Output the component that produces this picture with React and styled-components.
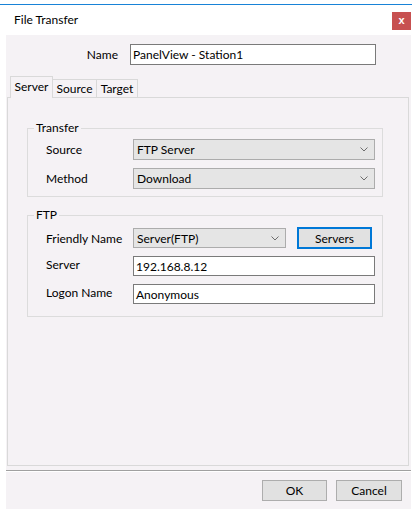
import React from "react";
import styled, { createGlobalStyle } from "styled-components";

const FONT = `"Segoe UI", Lato, "Liberation Sans", sans-serif`;

const GlobalStyle = createGlobalStyle`
  body {
    margin: 0;
    background: #ffffff;
    font-family: ${FONT};
    font-size: 12px;
    color: #000000;
  }
`;

const Window = styled.div`
  margin-top: 4px;
  width: 412px;
  border-top: 1px solid #1883d7;
  background: #ffffff;
`;

const TitleBar = styled.div`
  height: 30px;
  display: flex;
  align-items: center;
  justify-content: space-between;
  padding-left: 14px;
  padding-right: 1px;
`;

const Title = styled.span`
  font-size: 12px;
  margin-top: -1px;
`;

const CloseButton = styled.div`
  width: 19px;
  height: 18px;
  margin-top: 2px;
  background: #c75050;
  color: #ffffff;
  display: flex;
  align-items: center;
  justify-content: center;
  font-family: "Liberation Sans", sans-serif;
  font-weight: bold;
  font-size: 11px;
  line-height: 1;
  padding-bottom: 2px;
  box-sizing: border-box;
`;

const Body = styled.div`
  margin-left: 6px;
  width: 405px;
  height: 474px;
  background: #f5f2f5;
  display: flex;
  flex-direction: column;
`;

const NameRow = styled.div`
  display: grid;
  grid-template-columns: 112px 246px;
  column-gap: 12px;
  align-items: center;
  margin-top: 9px;
`;

const NameLabel = styled.label`
  text-align: right;
`;

const TextBox = styled.div`
  height: ${(p) => p.$h || 20}px;
  box-sizing: border-box;
  border: 1px solid #7a7a7a;
  background: #ffffff;
  padding-left: 2px;
  display: flex;
  align-items: center;
  white-space: nowrap;
  grid-column: ${(p) => p.$span || "auto"};
`;

const TabStrip = styled.div`
  display: flex;
  align-items: flex-end;
  margin-top: 11px;
  margin-left: 4px;
  margin-bottom: -1px;
  position: relative;
  z-index: 1;
`;

const Tab = styled.div`
  width: ${(p) => p.$w}px;
  height: ${(p) => (p.$active ? 22 : 18)}px;
  margin-bottom: ${(p) => (p.$active ? 0 : 1)}px;
  margin-left: ${(p) => (p.$first ? 0 : -1)}px;
  box-sizing: border-box;
  border: 1px solid #d9d9d9;
  border-bottom: none;
  background: #f5f2f5;
  display: flex;
  justify-content: center;
  padding-top: ${(p) => (p.$active ? 2 : 1)}px;
`;

const Panel = styled.div`
  margin-left: 1px;
  width: 402px;
  height: 369px;
  box-sizing: border-box;
  border: 1px solid #d9d9d9;
  background: #f5f2f5;
  padding: 23px 0 0 19px;
  display: flex;
  flex-direction: column;
  gap: 11px;
`;

const Group = styled.fieldset`
  margin: 0;
  width: 356px;
  box-sizing: border-box;
  border: 1px solid #dcdcdc;
  padding: 0;
  min-width: 0;
`;

const Legend = styled.legend`
  margin-left: 6px;
  padding: 0 2px;
  line-height: 14px;
`;

const Rows = styled.div`
  display: grid;
  grid-template-columns: 87px ${(p) => p.$cols};
  grid-auto-rows: ${(p) => p.$rows};
  row-gap: ${(p) => p.$gap}px;
  align-items: center;
  padding: ${(p) => p.$pad};
`;

const FieldLabel = styled.span`
  margin-top: ${(p) => p.$up || 0}px;
  white-space: nowrap;
`;

const Combo = styled.div`
  height: ${(p) => p.$h || 21}px;
  box-sizing: border-box;
  border: 1px solid #acacac;
  background: #e5e5e5;
  display: flex;
  align-items: center;
  justify-content: space-between;
  padding: 0 6px 0 3px;
`;

const Chevron = () => (
  <svg width="8" height="5" viewBox="0 0 8 5">
    <polyline points="0.5,0.5 4,4 7.5,0.5" fill="none" stroke="#6d6d6d" strokeWidth="1" />
  </svg>
);

const Button = styled.div`
  height: ${(p) => p.$h || 21}px;
  width: ${(p) => p.$w}px;
  box-sizing: border-box;
  border: ${(p) => (p.$focus ? "2px solid #0078d7" : "1px solid #adadad")};
  background: #e1e1e1;
  display: flex;
  align-items: center;
  justify-content: center;
  margin-left: ${(p) => p.$ml || 0}px;
`;

const Separator = styled.div`
  margin-top: 4px;
  height: 1px;
  background: #a0a0a0;
  border-bottom: 1px solid #ffffff;
`;

const Footer = styled.div`
  display: flex;
  justify-content: flex-end;
  gap: 9px;
  padding: 8px 9px 0 0;
`;

export default function App() {
  return (
    <>
      <GlobalStyle />
      <Window>
        <TitleBar>
          <Title>File Transfer</Title>
          <CloseButton>x</CloseButton>
        </TitleBar>
        <Body>
          <NameRow>
            <NameLabel>Name</NameLabel>
            <TextBox $h={21}>PanelView - Station1</TextBox>
          </NameRow>

          <TabStrip>
            <Tab $first $active $w={43}>Server</Tab>
            <Tab $w={45}>Source</Tab>
            <Tab $w={42}>Target</Tab>
          </TabStrip>

          <Panel>
            <Group>
              <Legend>Transfer</Legend>
              <Rows $cols="242px" $rows="21px" $gap={8} $pad="4px 0 7px 18px">
                <FieldLabel>Source</FieldLabel>
                <Combo>
                  FTP Server
                  <Chevron />
                </Combo>
                <FieldLabel>Method</FieldLabel>
                <Combo>
                  Download
                  <Chevron />
                </Combo>
              </Rows>
            </Group>

            <Group>
              <Legend>FTP</Legend>
              <Rows $cols="153px 89px" $rows="22px" $gap={6} $pad="5px 0 11px 18px">
                <FieldLabel>Friendly Name</FieldLabel>
                <Combo $h={20}>
                  Server(FTP)
                  <Chevron />
                </Combo>
                <Button $focus $w={75} $h={22} $ml={11}>Servers</Button>
                <FieldLabel $up={-4}>Server</FieldLabel>
                <TextBox $span="2 / 4">192.168.8.12</TextBox>
                <FieldLabel $up={-4}>Logon Name</FieldLabel>
                <TextBox $span="2 / 4">Anonymous</TextBox>
              </Rows>
            </Group>
          </Panel>

          <Separator />
          <Footer>
            <Button $w={65}>OK</Button>
            <Button $w={66}>Cancel</Button>
          </Footer>
        </Body>
      </Window>
    </>
  );
}
